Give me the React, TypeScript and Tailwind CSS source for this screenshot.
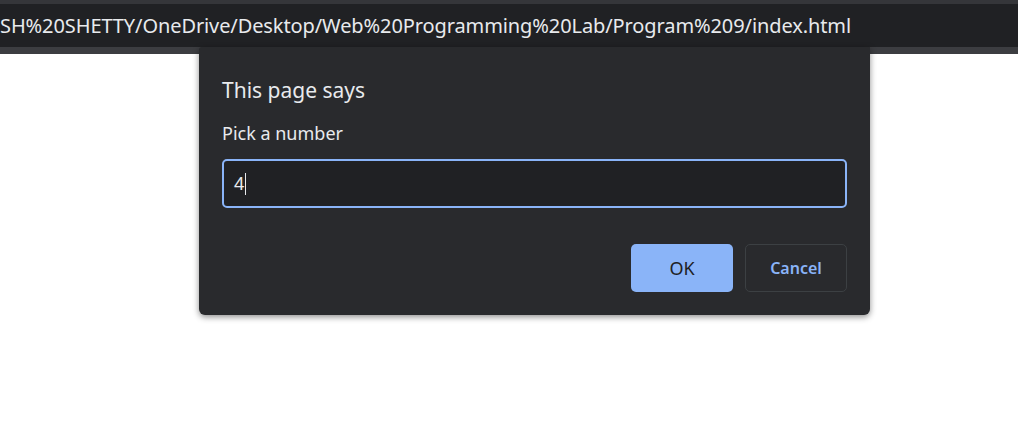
import React from 'react';

const font = { fontFamily: '"Noto Sans", "Open Sans", sans-serif' };

const App: React.FC = () => {
  return (
    <div className="relative w-[1018px] h-[425px] bg-white overflow-hidden" style={font}>
      {/* Browser chrome */}
      <div className="h-[4px] bg-[#35363a]" />
      <div className="h-[43px] bg-[#202124] flex items-center overflow-hidden">
        <span className="whitespace-nowrap text-[20px] text-[#e8eaed] tracking-[-0.1px]">
          SH%20SHETTY/OneDrive/Desktop/Web%20Programming%20Lab/Program%209/index.html
        </span>
      </div>
      <div className="h-[7px] bg-[#3c3d41]" />

      {/* Prompt dialog */}
      <div className="absolute left-[199px] top-[47px] w-[671px] h-[268px] bg-[#292a2d] rounded-b-[6px] rounded-tl-[3px] shadow-[0_2px_6px_rgba(0,0,0,0.45)] px-[23px] pt-[29px]">
        <h2 className="text-[21px] leading-[28px] text-[#e8eaed] mb-[17px]">This page says</h2>
        <p className="text-[18px] leading-[24px] text-[#e8eaed] mb-[14px]">Pick a number</p>
        <div className="h-[49px] w-[625px] rounded-[5px] border-2 border-[#8ab4f8] bg-[#202124] flex items-center pl-[10px]">
          <span className="text-[18px] text-[#e8eaed]">4</span>
          <span className="w-px h-[22px] bg-[#e8eaed] ml-[1px]" />
        </div>
        <div className="flex justify-end gap-[12px] mt-[36px] w-[625px]">
          <button className="w-[102px] h-[48px] rounded-[5px] bg-[#8ab4f8] text-[#202124] text-[18px]">OK</button>
          <button className="w-[102px] h-[48px] rounded-[5px] border border-[#3c4043] text-[#8ab4f8] text-[16px] font-semibold">Cancel</button>
        </div>
      </div>
    </div>
  );
};

export default App;
